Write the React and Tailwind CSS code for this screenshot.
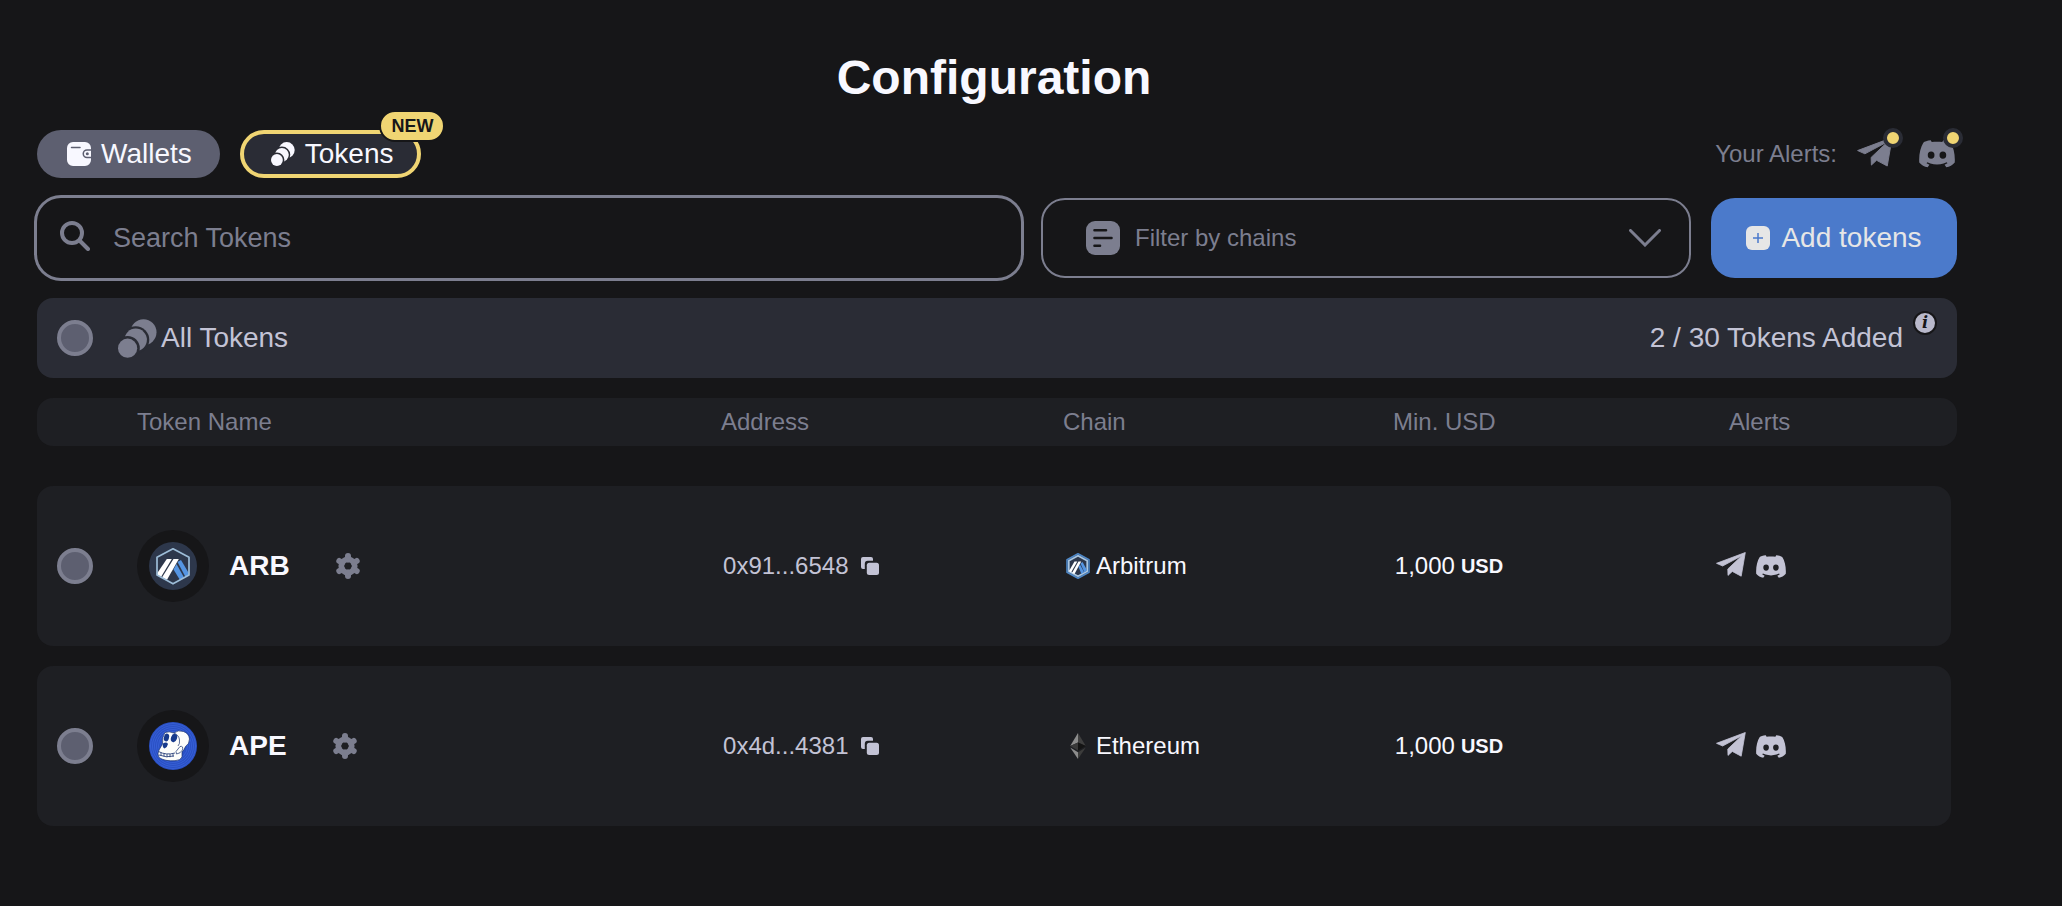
import React from "react";

function CoinsIcon({ className }) {
  return (
    <svg viewBox="0 0 39 39" className={className} aria-hidden="true">
      <circle cx="25.5" cy="13.2" r="13" fill="currentColor" />
      <circle cx="17.7" cy="20.8" r="13.6" fill="#2a2c35" />
      <circle cx="17.7" cy="20.8" r="11.2" fill="currentColor" />
      <circle cx="9.6" cy="29.2" r="12.2" fill="#2a2c35" />
      <circle cx="9.6" cy="29.2" r="9.6" fill="currentColor" />
    </svg>
  );
}

function WalletIcon({ className }) {
  return (
    <svg viewBox="0 0 24 24" className={className} aria-hidden="true">
      <path
        fill="currentColor"
        d="M6 0h12a6 6 0 0 1 6 6v1.300h-4a4.500 4.500 0 0 0 0 9h4V18a6 6 0 0 1-6 6H6a6 6 0 0 1-6-6V6a6 6 0 0 1 6-6z"
      />
      <path d="M4.500 5.600h8.500" stroke="#5d5f70" strokeWidth="1.500" strokeLinecap="round" />
      <path fill="currentColor" d="M24 8.700h-4a3 3 0 0 0 0 6h4z" />
      <circle cx="20.300" cy="11.700" r="1.500" fill="#5d5f70" />
    </svg>
  );
}

function TelegramIcon({ className }) {
  return (
    <svg viewBox="0 0 30 25" className={className} aria-hidden="true">
      <g fill="currentColor" stroke="currentColor" strokeWidth="0.8" strokeLinejoin="round">
        <path d="M0.500 11.300L29.300 0.500L25.200 24.200L16.300 19.400L12 23.400L11.800 17L25.800 3.800L6.600 14Z" />
      </g>
    </svg>
  );
}

function DiscordIcon({ className }) {
  return (
    <svg viewBox="0 0 30 23" className={className} aria-hidden="true">
      <path
        fill="currentColor"
        fillRule="evenodd"
        d="M9.800 0.200C7 0.500 4.500 1.300 3.600 2.200C1.200 6 -0.200 12 0.200 18.800C2 21 4.500 22.300 7.200 22.800L8.700 20.700L6.300 19.400L6.900 18.500L9.500 19.600C13 20.700 17 20.700 20.500 19.600L23.100 18.500L23.700 19.400L21.300 20.700L22.800 22.800C25.500 22.300 28 21 29.800 18.800C30.200 12 28.800 6 26.400 2.200C25.500 1.300 23 0.500 20.200 0.200L19.400 1.700C16.500 1.300 13.500 1.300 10.600 1.700ZM10.100 9.500a2.800 3.100 0 1 1 0 6.200a2.800 3.100 0 1 1 0-6.200ZM19.900 9.500a2.800 3.100 0 1 1 0 6.200a2.800 3.100 0 1 1 0-6.200Z"
      />
    </svg>
  );
}

function SearchIcon({ className }) {
  return (
    <svg viewBox="0 0 30 30" className={className} fill="none" stroke="currentColor" strokeWidth="4" aria-hidden="true">
      <circle cx="12" cy="12" r="10" />
      <path d="M19.500 19.500L28 28" strokeLinecap="round" />
    </svg>
  );
}

function ListIcon({ className }) {
  return (
    <svg viewBox="0 0 34 34" className={className} aria-hidden="true">
      <rect width="34" height="34" rx="9" fill="currentColor" />
      <path d="M8.500 9.200h11.500M8.500 17h17M8.500 24.800h5.500" stroke="#161618" strokeWidth="2.600" strokeLinecap="round" />
    </svg>
  );
}

function GearIcon({ className }) {
  return (
    <svg viewBox="0 0 26 26" className={className} aria-hidden="true">
      <path
        d="M13 3v3.500M13 19.500v3.500M4.300 8l3 1.750M18.700 16.250l3 1.750M4.300 18l3-1.750M18.700 9.750l3-1.750"
        stroke="currentColor"
        strokeWidth="6"
        strokeLinecap="round"
      />
      <circle cx="13" cy="13" r="6.700" fill="none" stroke="currentColor" strokeWidth="5.800" />
    </svg>
  );
}

function CopyIcon({ className }) {
  return (
    <svg viewBox="0 0 18 18" className={className} aria-hidden="true">
      <path fill="currentColor" d="M2 0h8a2 2 0 0 1 2 2v1.800H6.800a3 3 0 0 0-3 3V12H2a2 2 0 0 1-2-2V2a2 2 0 0 1 2-2z" />
      <rect x="5.800" y="5.800" width="12.200" height="12.200" rx="2.500" fill="currentColor" />
    </svg>
  );
}

function ArbitrumToken({ className }) {
  return (
    <svg viewBox="0 0 48 48" className={className} aria-hidden="true">
      <circle cx="24" cy="24" r="24" fill="#2d374b" />
      <path d="M28.500 20L32 18L40 31.500V32.500L36.500 35Z" fill="#5595e2" />
      <path d="M24.500 27.500L27.500 22L35 35.500L31 38Z" fill="#5595e2" />
      <path d="M17.800 17H22.800L12 35L8 32.500V31.500Z" fill="#fff" />
      <path d="M24.500 17H29.800L18 37.800L13 35.500Z" fill="#fff" />
      <path d="M24 6.800L40 15.200V33L24 41.800L8 33V15.200Z" fill="none" stroke="#9dbdd8" strokeWidth="1.700" strokeLinejoin="round" />
    </svg>
  );
}

function ArbitrumChain({ className }) {
  return (
    <svg viewBox="0 0 24 26" className={className} aria-hidden="true">
      <path d="M12 0.800L23 6.800V19.200L12 25.200L1 19.200V6.800Z" fill="#2d374b" stroke="#4d86c6" strokeWidth="1.600" strokeLinejoin="round" />
      <path d="M12 2.800L21.200 7.800V18.200L12 23.200L2.800 18.200V7.800Z" fill="none" stroke="#a9c6e2" strokeWidth="1.700" strokeLinejoin="round" />
      <path d="M14.500 10.500L16.500 9L21 17L18.500 19.500Z" fill="#5595e2" />
      <path d="M12.500 14L14 11.500L18 19L15.500 21Z" fill="#5595e2" />
      <path d="M8.500 8.500H11.300L5 19.500L3 18Z" fill="#fff" />
      <path d="M12.500 8.500H15.200L8.500 21L6 20Z" fill="#fff" />
    </svg>
  );
}

function ApeToken({ className }) {
  return (
    <svg viewBox="0 0 48 48" className={className} aria-hidden="true">
      <circle cx="24" cy="24" r="24" fill="#2a50c4" />
      <g fill="none" stroke="#3c65dc" strokeWidth="0.700">
        <circle cx="24" cy="24" r="22.500" />
        <circle cx="24" cy="24" r="20.500" />
        <circle cx="24" cy="24" r="18.500" />
        <circle cx="24" cy="24" r="16.500" />
        <circle cx="24" cy="24" r="14.500" />
      </g>
      <g fill="#fdfdfb" stroke="#17306f" strokeWidth="0.700" strokeLinejoin="round">
        <path d="M16 10.500Q20 9 25 11Q29 7.500 34.500 9.500Q40 11.500 40.500 17Q40.500 22 36.500 24.500Q35.500 27.500 33 30L33 35Q31.500 38.500 26 38.700Q16 39.500 10 35.500Q8 32 10 28L13.500 22Q13 15 16 10.500Z" />
        <path d="M27 29.500L31 24.500Q34.500 23.500 33.500 28Q31.500 31.500 27.500 32Z" />
        <path d="M25 11Q30 13 30.500 18Q31 22 29 24" fill="none" />
      </g>
      <g fill="#173a8c">
        <ellipse cx="17.500" cy="15.500" rx="2.500" ry="4" transform="rotate(15 17.500 15.500)" />
        <ellipse cx="25" cy="16" rx="3" ry="4.200" transform="rotate(20 25 16)" />
        <path d="M14 21.500Q17.500 19.500 19 22Q18.500 25 15.500 26.500Q13 25 14 21.500Z" />
      </g>
      <path d="M9.500 29.500Q17 33.500 26 31M10 33Q17 36 25 34M12 30.500v3M15 31.500v3M18 32v3.200M21 32v3.200M24 31.500v3" fill="none" stroke="#17306f" strokeWidth="0.800" />
    </svg>
  );
}

function EthereumChain({ className }) {
  return (
    <svg viewBox="0 0 24 26" className={className} aria-hidden="true">
      <path d="M12 0L4.200 13L12 9.500Z" fill="#8c8c8c" />
      <path d="M12 0L19.800 13L12 9.500Z" fill="#3f3f3f" />
      <path d="M12 9.500L4.200 13L12 17.600Z" fill="#393939" />
      <path d="M12 9.500L19.800 13L12 17.600Z" fill="#141414" />
      <path d="M12 26V19.200L4.200 14.600Z" fill="#8c8c8c" />
      <path d="M12 26V19.200L19.800 14.600Z" fill="#3c3c3b" />
    </svg>
  );
}

const tokens = [
  { symbol: "ARB", Logo: ArbitrumToken, address: "0x91...6548", chain: "Arbitrum", ChainLogo: ArbitrumChain, min: "1,000" },
  { symbol: "APE", Logo: ApeToken, address: "0x4d...4381", chain: "Ethereum", ChainLogo: EthereumChain, min: "1,000" },
];

const rowGrid = "grid grid-cols-[100px_584fr_342fr_330fr_322fr_242fr] items-center";

function RoundCheck({ label }) {
  return (
    <input
      type="checkbox"
      aria-label={label}
      className="size-9 shrink-0 appearance-none rounded-full border-4 border-[#7c7e8f] bg-[#5d5f70] checked:bg-[#f0d573]"
    />
  );
}

function AlertButton({ label, children }) {
  return (
    <button aria-label={label} className="relative flex size-10 items-center">
      {children}
      <span className="absolute -top-1.5 -right-1.5 size-5 rounded-full border-4 border-[#2a2c35] bg-[#f0d573]" />
    </button>
  );
}

export default function App() {
  return (
    <main className="min-h-screen bg-[#161618] pt-12 pr-[105px] pb-20 pl-[37px] font-['Liberation_Sans',Arial,sans-serif] text-[#f8f8ff]">
      <h1 className="mb-[22px] pr-1.5 text-center text-5xl leading-[60px] font-bold">Configuration</h1>

      <div className="mb-5 flex items-center justify-between">
        <nav className="flex gap-5 text-[28px] leading-8">
          <button className="flex h-12 items-center gap-2.5 rounded-full bg-[#5d5f70] pr-7 pl-[30px]">
            <WalletIcon className="size-6" />
            Wallets
          </button>
          <button className="relative flex h-12 items-center gap-2.5 rounded-full border-4 border-[#f0d573] bg-[#2a2c35] pr-6 pl-[27px]">
            <CoinsIcon className="size-6" />
            Tokens
            <span className="absolute -top-6 -right-7 rounded-full border-2 border-[#161618] bg-[#f0d573] px-2.5 text-lg leading-7 font-bold text-[#161618]">
              NEW
            </span>
          </button>
        </nav>
        <div className="flex items-center gap-5 text-2xl text-[#7c7e8f]">
          Your Alerts:
          <AlertButton label="Telegram alerts">
            <TelegramIcon className="mb-1 w-9" />
          </AlertButton>
          <AlertButton label="Discord alerts">
            <DiscordIcon className="mx-auto w-9" />
          </AlertButton>
        </div>
      </div>

      <div className="mb-5 grid grid-cols-[984fr_650fr_246px] gap-5">
        <label className="flex h-20 items-center gap-[23px] rounded-3xl pr-6 pl-[23px] text-[#7c7e8f] ring-3 ring-[#7c7e8f]">
          <SearchIcon className="mb-1 size-[30px] shrink-0" />
          <input
            type="text"
            aria-label="Search Tokens"
            placeholder="Search Tokens"
            className="min-w-0 flex-1 bg-transparent text-[27px] leading-8 outline-none placeholder:text-[#7c7e8f]"
          />
        </label>
        <label className="flex h-20 items-center gap-[15px] rounded-3xl border-2 border-[#7c7e8f] pr-7 pl-[43px] text-[#7c7e8f]">
          <ListIcon className="size-[34px] shrink-0" />
          <select aria-label="Filter by chains" className="min-w-0 flex-1 appearance-none bg-transparent text-2xl outline-none">
            <option>Filter by chains</option>
            <option>Arbitrum</option>
            <option>Ethereum</option>
          </select>
          <svg viewBox="0 0 32 18" className="w-8 shrink-0" fill="none" stroke="currentColor" strokeWidth="3" strokeLinecap="round" aria-hidden="true">
            <path d="M1.500 1.500L16 16L30.500 1.500" />
          </svg>
        </label>
        <button className="flex h-20 items-center justify-center gap-[11px] rounded-3xl bg-[#4b7acb] text-[28px] text-[#e6e6e6]">
          <svg viewBox="0 0 24 24" className="size-6" aria-hidden="true">
            <rect width="24" height="24" rx="6" fill="currentColor" />
            <path d="M12 7v10M7 12h10" stroke="#4b7acb" strokeWidth="1.500" />
          </svg>
          Add tokens
        </button>
      </div>

      <section className="mb-5 flex h-20 items-center rounded-2xl bg-[#2a2c35] pr-5 pl-5 text-[28px] text-[#c3c3d5]">
        <RoundCheck label="Select all tokens" />
        <CoinsIcon className="mr-1 ml-[25px] size-[39px] text-[#7c7e8f]" />
        <h2 className="flex-1">All Tokens</h2>
        <p>2 / 30 Tokens Added</p>
        <button
          aria-label="Token limit information"
          className="mt-[13px] ml-2.5 size-6 self-start rounded-full border-2 border-[#161618] bg-[#b9b9cb] text-center font-['DejaVu_Serif',serif] text-base leading-5 font-bold text-[#161618] italic"
        >
          i
        </button>
      </section>

      <table className="block w-full text-left text-2xl">
        <thead className="mb-10 block">
          <tr className={`${rowGrid} h-12 rounded-2xl bg-[#1e1f23] text-[#7c7e8f]`}>
            <td />
            <th className="font-normal">Token Name</th>
            <th className="font-normal">Address</th>
            <th className="font-normal">Chain</th>
            <th className="font-normal">Min. USD</th>
            <th className="pl-3.5 font-normal">Alerts</th>
          </tr>
        </thead>
        <tbody className="flex flex-col gap-5 pr-1.5">
          {tokens.map(({ symbol, Logo, address, chain, ChainLogo, min }) => (
            <tr key={symbol} className={`${rowGrid} h-40 rounded-2xl bg-[#1e1f23]`}>
              <td className="flex pl-5">
                <RoundCheck label={`Select ${symbol}`} />
              </td>
              <td className="flex items-center">
                <span className="rounded-full bg-[#161618] p-3">
                  <Logo className="size-12" />
                </span>
                <span className="ml-5 text-[28px] font-bold">{symbol}</span>
                <button aria-label={`${symbol} settings`} className="ml-[45px] text-[#7c7e8f]">
                  <GearIcon className="size-[26px]" />
                </button>
              </td>
              <td className="flex items-center pl-1 text-[#c3c3d5]">
                <span className="w-[138px]">{address}</span>
                <button aria-label={`Copy ${symbol} address`}>
                  <CopyIcon className="size-[18px]" />
                </button>
              </td>
              <td className="flex items-center gap-1.5 pl-1.5">
                <ChainLogo className="w-6" />
                {chain}
              </td>
              <td className="flex items-center gap-1.5 pl-1.5">
                {min} <b className="text-xl">USD</b>
              </td>
              <td className="flex items-center gap-2.5 pl-1.5 text-[#c3c3d5]">
                <TelegramIcon className="mb-1 w-[30px]" />
                <DiscordIcon className="w-[30px]" />
              </td>
            </tr>
          ))}
        </tbody>
      </table>
    </main>
  );
}
